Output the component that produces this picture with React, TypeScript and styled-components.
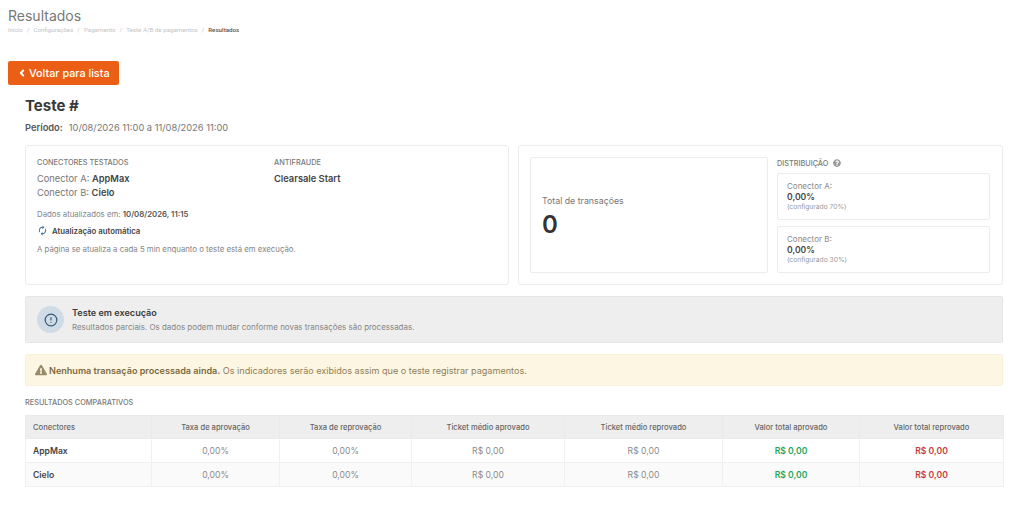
import { Fragment } from "react";
import styled, { createGlobalStyle } from "styled-components";
import { FaExclamationTriangle, FaQuestionCircle } from "react-icons/fa";
import { MdAutorenew } from "react-icons/md";
import { ChevronLeft, CircleAlert } from "lucide-react";

const GlobalStyle = createGlobalStyle`
  html, body {
    margin: 0;
    padding: 0;
    background: #fff;
    font-family: "Inter", "Liberation Sans", sans-serif;
    color: #6f6f6f;
  }
  * { box-sizing: border-box; }
`;

const Page = styled.div`
  width: 1024px;
  height: 515px;
  overflow: hidden;
  padding: 8px 21px 0 8px;
`;

const PageTitle = styled.h1`
  margin: 0;
  height: 16px;
  font-size: 14px;
  line-height: 16px;
  font-weight: 400;
  color: #777;
`;

const Breadcrumb = styled.div`
  display: flex;
  align-items: center;
  gap: 4px;
  height: 12px;
  font-family: "Roboto", "Liberation Sans", sans-serif;
  font-size: 6.2px;
  color: #c4c4c4;
`;

const Crumb = styled.span<{ $current?: boolean }>`
  color: ${(p) => (p.$current ? "#555" : "#c4c4c4")};
  font-weight: ${(p) => (p.$current ? 500 : 400)};
`;

const BackButton = styled.button`
  display: flex;
  align-items: center;
  gap: 2px;
  width: 111px;
  height: 24px;
  margin-top: 25px;
  padding: 0 0 0 9px;
  border: 0;
  border-radius: 2px;
  background: #ea5f15;
  color: #fff;
  font-family: inherit;
  font-size: 10.8px;
  font-weight: 500;
`;

const Content = styled.div`
  padding-left: 17px;
`;

const TestTitle = styled.h2`
  margin: 12px 0 0;
  height: 18px;
  font-size: 15px;
  line-height: 18px;
  font-weight: 700;
  color: #3a3a3a;
`;

const Period = styled.div`
  display: flex;
  gap: 6px;
  margin-top: 6px;
  height: 14px;
  font-size: 9.3px;
  line-height: 14px;
  color: #777;
  b {
    font-weight: 600;
    color: #555;
  }
`;

const TopRow = styled.div`
  display: grid;
  grid-template-columns: 484px 485px;
  gap: 9px;
  margin-top: 10px;
`;

const Card = styled.div`
  height: 140px;
  border: 1px solid #ececec;
  border-radius: 3px;
  background: #fff;
`;

const InfoCard = styled(Card)`
  padding: 11px 11px 0;
`;

const InfoColumns = styled.div`
  display: grid;
  grid-template-columns: 237px 1fr;
`;

const SmallHead = styled.div`
  height: 11px;
  font-size: 7.35px;
  line-height: 11px;
  font-weight: 500;
  color: #7a7a7a;
  text-transform: uppercase;
`;

const InfoLine = styled.div`
  height: 13.5px;
  font-size: 9.3px;
  line-height: 13.5px;
  color: #777;
  b {
    font-weight: 600;
    color: #444;
  }
`;

const InfoLines = styled.div`
  margin-top: 4px;
`;

const Note = styled.div`
  height: 12px;
  font-size: 7.8px;
  line-height: 12px;
  color: #858585;
  b {
    font-weight: 600;
    color: #555;
  }
`;

const UpdatedNote = styled(Note)`
  margin-top: 9px;
`;

const AutoRow = styled.div`
  display: flex;
  align-items: center;
  gap: 4px;
  height: 13px;
  margin-top: 4px;
  font-size: 7.8px;
  font-weight: 600;
  color: #444;
  svg {
    color: #3f6f96;
  }
`;

const HelpNote = styled(Note)`
  margin-top: 6px;
`;

const StatsCard = styled(Card)`
  display: grid;
  grid-template-columns: 238px 213px;
  gap: 9px;
  padding: 11px 12px 0 11px;
`;

const TotalBox = styled.div`
  display: flex;
  flex-direction: column;
  justify-content: center;
  height: 116px;
  padding: 2px 11px 0;
  border: 1px solid #ececec;
  border-radius: 2px;
`;

const TotalLabel = styled.div`
  font-size: 8.8px;
  line-height: 14px;
  color: #777;
`;

const TotalValue = styled.div`
  margin-top: 3px;
  font-size: 24px;
  line-height: 28px;
  font-weight: 600;
  color: #333;
`;

const DistHead = styled.div`
  display: flex;
  align-items: center;
  gap: 5px;
  height: 16px;
  padding-bottom: 4px;
  font-size: 7.3px;
  font-weight: 500;
  color: #7a7a7a;
  svg {
    color: #999;
  }
`;

const DistBox = styled.div`
  display: flex;
  flex-direction: column;
  justify-content: center;
  height: 47px;
  padding: 0 9px;
  border: 1px solid #ececec;
  border-radius: 2px;
  & + & {
    margin-top: 6px;
  }
`;

const DistLabel = styled.div`
  font-size: 8px;
  line-height: 11px;
  color: #888;
`;

const DistValue = styled.div`
  font-size: 8.6px;
  line-height: 11px;
  font-weight: 600;
  color: #444;
`;

const DistConfig = styled.div`
  font-size: 6.7px;
  line-height: 9px;
  color: #999;
`;

const RunningAlert = styled.div`
  display: flex;
  align-items: center;
  gap: 8px;
  height: 47px;
  margin-top: 11px;
  padding-left: 11px;
  border: 1px solid #e6e6e6;
  border-radius: 2px;
  background: #eeeeee;
`;

const IconCircle = styled.div`
  display: flex;
  align-items: center;
  justify-content: center;
  width: 27px;
  height: 27px;
  border-radius: 50%;
  background: #cfdbe5;
  color: #35597a;
`;

const AlertTitle = styled.div`
  font-size: 9.1px;
  line-height: 13px;
  font-weight: 600;
  color: #3d3d3d;
`;

const AlertText = styled.div`
  margin-top: 3px;
  font-size: 7.95px;
  line-height: 11px;
  color: #858585;
`;

const EmptyAlert = styled.div`
  display: flex;
  align-items: center;
  gap: 2px;
  height: 32px;
  margin-top: 11px;
  padding-left: 9px;
  border: 1px solid #f8f0d8;
  border-radius: 2px;
  background: #fdf6e3;
  font-size: 9.08px;
  color: #8f8059;
  svg {
    color: #9a8b68;
  }
  b {
    font-weight: 600;
    color: #7d6b3f;
  }
`;

const SectionHead = styled(SmallHead)`
  margin-top: 11px;
  height: 12px;
`;

const Table = styled.table`
  width: 978px;
  margin-top: 6px;
  border-collapse: collapse;
  table-layout: fixed;
`;

const Th = styled.th<{ $left?: boolean }>`
  height: 23px;
  padding: ${(p) => (p.$left ? "0 0 0 7px" : "0")};
  border: 1px solid #eaeaea;
  background: #eeeeee;
  font-size: 7.6px;
  font-weight: 500;
  color: #666;
  text-align: ${(p) => (p.$left ? "left" : "center")};
`;

const Tr = styled.tr<{ $shade?: boolean }>`
  background: ${(p) => (p.$shade ? "#fafafa" : "#fff")};
`;

const Td = styled.td<{ $tone?: "green" | "red" | "name" }>`
  height: 24px;
  padding: ${(p) => (p.$tone === "name" ? "0 0 0 7px" : "0")};
  border: 1px solid #f0f0f0;
  font-size: 8.6px;
  text-align: ${(p) => (p.$tone === "name" ? "left" : "center")};
  font-weight: ${(p) => (p.$tone ? 600 : 400)};
  color: ${(p) =>
    p.$tone === "green"
      ? "#27a560"
      : p.$tone === "red"
      ? "#c93a3a"
      : p.$tone === "name"
      ? "#444"
      : "#8a8a8a"};
`;

const crumbs = ["Início", "Configurações", "Pagamento", "Teste A/B de pagamentos"];
const columnWidths = [126, 128, 132, 153, 158, 137, 144];
const rows = ["AppMax", "Cielo"];

export default function App() {
  return (
    <Page>
      <GlobalStyle />
      <PageTitle>Resultados</PageTitle>
      <Breadcrumb>
        {crumbs.map((c) => (
          <Fragment key={c}>
            <Crumb>{c}</Crumb>
            <Crumb>/</Crumb>
          </Fragment>
        ))}
        <Crumb $current>Resultados</Crumb>
      </Breadcrumb>
      <BackButton>
        <ChevronLeft size={10} strokeWidth={4.5} />
        Voltar para lista
      </BackButton>
      <Content>
        <TestTitle>Teste #</TestTitle>
        <Period>
          <b>Período:</b>
          <span>10/08/2026 11:00 a 11/08/2026 11:00</span>
        </Period>
        <TopRow>
          <InfoCard>
            <InfoColumns>
              <div>
                <SmallHead>Conectores testados</SmallHead>
                <InfoLines>
                  <InfoLine>
                    Conector A: <b>AppMax</b>
                  </InfoLine>
                  <InfoLine>
                    Conector B: <b>Cielo</b>
                  </InfoLine>
                </InfoLines>
              </div>
              <div>
                <SmallHead>Antifraude</SmallHead>
                <InfoLines>
                  <InfoLine>
                    <b>Clearsale Start</b>
                  </InfoLine>
                </InfoLines>
              </div>
            </InfoColumns>
            <UpdatedNote>
              Dados atualizados em: <b>10/08/2026, 11:15</b>
            </UpdatedNote>
            <AutoRow>
              <MdAutorenew size={11} />
              Atualização automática
            </AutoRow>
            <HelpNote>A página se atualiza a cada 5 min enquanto o teste está em execução.</HelpNote>
          </InfoCard>
          <StatsCard>
            <TotalBox>
              <TotalLabel>Total de transações</TotalLabel>
              <TotalValue>0</TotalValue>
            </TotalBox>
            <div>
              <DistHead>
                DISTRIBUIÇÃO
                <FaQuestionCircle size={8} />
              </DistHead>
              <DistBox>
                <DistLabel>Conector A:</DistLabel>
                <DistValue>0,00%</DistValue>
                <DistConfig>(configurado 70%)</DistConfig>
              </DistBox>
              <DistBox>
                <DistLabel>Conector B:</DistLabel>
                <DistValue>0,00%</DistValue>
                <DistConfig>(configurado 30%)</DistConfig>
              </DistBox>
            </div>
          </StatsCard>
        </TopRow>
        <RunningAlert>
          <IconCircle>
            <CircleAlert size={14} strokeWidth={2} />
          </IconCircle>
          <div>
            <AlertTitle>Teste em execução</AlertTitle>
            <AlertText>Resultados parciais. Os dados podem mudar conforme novas transações são processadas.</AlertText>
          </div>
        </RunningAlert>
        <EmptyAlert>
          <FaExclamationTriangle size={12} />
          <span>
            <b>Nenhuma transação processada ainda.</b> Os indicadores serão exibidos assim que o teste registrar
            pagamentos.
          </span>
        </EmptyAlert>
        <SectionHead>Resultados comparativos</SectionHead>
        <Table>
          <colgroup>
            {columnWidths.map((w, i) => (
              <col key={i} style={{ width: w }} />
            ))}
          </colgroup>
          <thead>
            <tr>
              <Th $left>Conectores</Th>
              <Th>Taxa de aprovação</Th>
              <Th>Taxa de reprovação</Th>
              <Th>Ticket médio aprovado</Th>
              <Th>Ticket médio reprovado</Th>
              <Th>Valor total aprovado</Th>
              <Th>Valor total reprovado</Th>
            </tr>
          </thead>
          <tbody>
            {rows.map((name, i) => (
              <Tr key={name} $shade={i === 1}>
                <Td $tone="name">{name}</Td>
                <Td>0,00%</Td>
                <Td>0,00%</Td>
                <Td>R$ 0,00</Td>
                <Td>R$ 0,00</Td>
                <Td $tone="green">R$ 0,00</Td>
                <Td $tone="red">R$ 0,00</Td>
              </Tr>
            ))}
          </tbody>
        </Table>
      </Content>
    </Page>
  );
}
